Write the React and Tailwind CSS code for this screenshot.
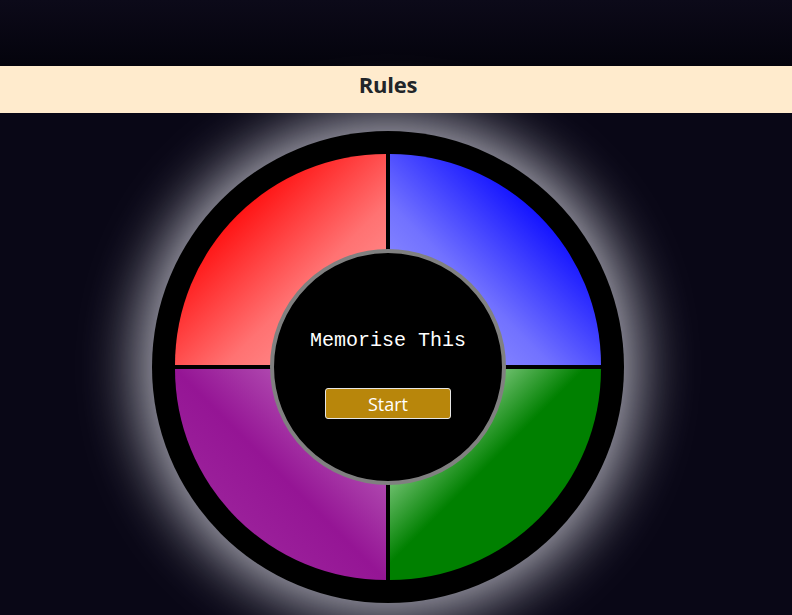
export default function App() {
  return (
    <div className="min-h-[615px] w-full bg-[#090716] overflow-hidden">
      <div className="h-[66px] w-full bg-[linear-gradient(to_bottom,#0c0a19,#04030c)]" />
      <div className="relative z-10 h-[47px] w-full bg-[#ffebcd]">
        <div className="w-[776px] h-full flex items-center justify-center pb-[11px]">
          <h1 className="text-[22px] font-bold text-[#222529] font-['Open_Sans',sans-serif] leading-none tracking-[-0.2px]">Rules</h1>
        </div>
      </div>
      <div className="w-[776px] flex justify-center pt-[18px]">
        <div className="relative w-[472px] h-[472px] rounded-full bg-black p-[23px] shadow-[0_0_60px_12px_rgba(240,240,250,0.75)]">
          <div className="grid grid-cols-[211px_211px] grid-rows-[211px_211px] gap-[4px]">
            <div className="rounded-tl-full bg-[linear-gradient(135deg,#ff0000_22%,#ff7272_62%,#ffa4a4_100%)]" />
            <div className="rounded-tr-full bg-[linear-gradient(225deg,#0000ff_22%,#7272ff_62%,#a4a4ff_100%)]" />
            <div className="rounded-bl-full bg-[linear-gradient(45deg,#a22fa2_0%,#951595_50%,#cc82cc_100%)]" />
            <div className="rounded-br-full bg-[linear-gradient(135deg,#a0dca0_18%,#008000_46%)]" />
          </div>
          <div className="absolute left-1/2 top-1/2 -translate-x-1/2 -translate-y-1/2 w-[236px] h-[236px] rounded-full bg-black border-[4px] border-[#808080] flex flex-col items-center pt-[73px]">
            <div className="text-[20px] leading-[30px] text-white font-['Liberation_Mono','Courier_New',monospace] whitespace-pre">Memorise This</div>
            <button className="mt-[32px] w-[126px] h-[31px] bg-[#b8860b] border border-[#e6e6e6] rounded-[3px] text-white text-[18px] leading-none font-['Open_Sans',sans-serif] flex items-center justify-center">Start</button>
          </div>
        </div>
      </div>
    </div>
  );
}
